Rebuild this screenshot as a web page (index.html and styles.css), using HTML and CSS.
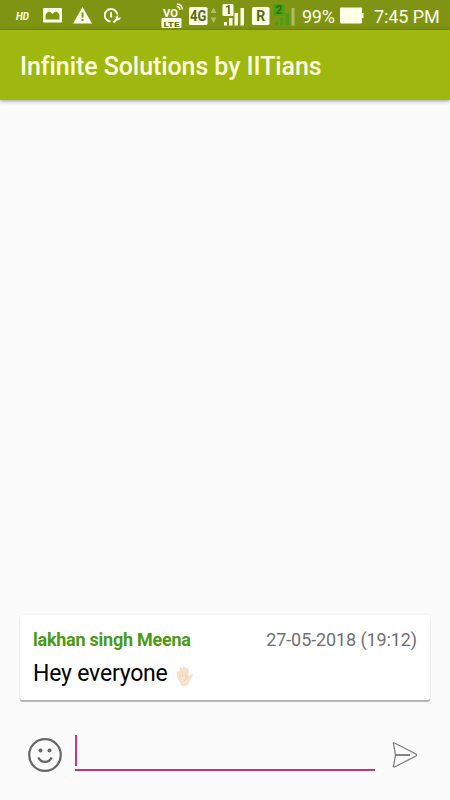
FILE: index.html
```
<!DOCTYPE html>
<html lang="en">
    <head>
        <meta charset="UTF-8">
        <title>Infinite Solutions by IITians</title>
        <link rel="stylesheet" href="styles.css">
    </head>
    <body>
        <div id="app">
            <div class="status">
                <div class="left">
                    <svg class="hd" width="16" height="30" viewBox="0 0 16 30"><text x="1" y="19.500" textLength="13" lengthAdjust="spacingAndGlyphs">HD</text></svg>
                    <svg class="photo" width="20" height="30" viewBox="0 0 20 30">
                        <path fill-rule="evenodd" d="M1 8h17q1 0 1 1v12.500q0 1-1 1H1q-1 0-1-1V9q0-1 1-1zM2.500 19.500h14v-4.500Q14.500 11.500 13 11.500q-1.500 0-3.500 2.500Q7.500 11.500 6 11.500 4.500 11.500 2.500 15z"/>
                    </svg>
                    <svg class="warn" width="20" height="30" viewBox="0 0 20 30">
                        <path fill-rule="evenodd" d="M9.500 7L19 23.500H0zM8.500 12.500v5h2v-5zM8.500 19v2h2v-2z"/>
                    </svg>
                    <svg class="gauge" width="18" height="30" viewBox="0 0 18 30">
                        <path class="line" d="M6.500 21.500A6.300 6.300 0 1 1 13.300 14.500"/>
                        <path d="M6.300 12h1.500l.5 5.500H5.800z"/>
                        <path class="line" d="M9.500 22.500l4-4"/>
                        <path d="M11.500 17l3-2-.5 2 1 1 2-.5-1.500 2.500-3 .5z"/>
                    </svg>
                </div>
                <div class="right">
                    <svg class="volte" width="22" height="30" viewBox="0 0 22 30">
                        <text x="2" y="16.600" textLength="15" lengthAdjust="spacingAndGlyphs">VO</text>
                        <path class="thin" d="M15.500 6.500q3 0 3.500 3.500M16 4q5 .5 5.500 5.500"/>
                        <rect x="0.500" y="18" width="20" height="10" rx="1"/>
                        <text class="cut" x="2.500" y="26.500" textLength="16" lengthAdjust="spacingAndGlyphs">LTE</text>
                    </svg>
                    <svg class="data" width="29" height="30" viewBox="0 0 29 30">
                        <rect x="0" y="7" width="18.500" height="18" rx="1.500"/>
                        <text class="cut" x="1" y="21" textLength="16.500" lengthAdjust="spacingAndGlyphs">4G</text>
                        <path class="dim" d="M21.500 13l3-5.500 3 5.500zM21.500 17.500h6l-3 5.500z"/>
                    </svg>
                    <svg class="sim" width="23" height="30" viewBox="0 0 23 30">
                        <rect x="0.500" y="4" width="11" height="12" rx="1"/>
                        <text class="cut" x="3" y="14.200">1</text>
                        <path d="M2 22h3v3.500H2zM7 18h3.500v7.500H7zM12.500 13H16v12.500h-3.500zM18.500 8H22v17.500h-3.500z"/>
                    </svg>
                    <svg class="roam" width="18" height="30" viewBox="0 0 18 30">
                        <rect x="0" y="7" width="17.500" height="18" rx="1.500"/>
                        <text class="cut" x="4.200" y="20.800">R</text>
                    </svg>
                    <svg class="sim sim2" width="23" height="30" viewBox="0 0 23 30">
                        <rect x="0.500" y="4" width="11" height="12" rx="1"/>
                        <text class="cut" x="2.500" y="14.200">2</text>
                        <path d="M2 22h3v3.500H2zM7 18h3.500v7.500H7zM12.500 13H16v12.500h-3.500z"/>
                        <path class="dim" d="M18.500 8h3v17.500h-3z"/>
                    </svg>
                    <span class="percent">99%</span>
                    <svg class="battery" width="25" height="30" viewBox="0 0 25 30">
                        <path d="M1 7.500h20q1 0 1 1V13h1.500v5H22v4.500q0 1-1 1H1q-1 0-1-1v-14q0-1 1-1z"/>
                    </svg>
                    <span class="time">7:45 PM</span>
                </div>
            </div>

            <div class="header">
                <h1>Infinite Solutions by IITians</h1>
            </div>

            <div class="list">
                <div class="msg">
                    <div class="info">
                        <span class="name">lakhan singh Meena</span>
                        <span class="date">27-05-2018 (19:12)</span>
                    </div>
                    <div class="text">
                        <span>Hey everyone</span>
                        <svg class="hand" width="18" height="20" viewBox="0 0 18 21">
                            <path d="M5 18.500L1.500 12.500 1 6.500Q1.800 4.800 2.800 6.500L3.800 10.500 3.800 3Q5 1.400 6 3L6.500 9.500 7.200 1.700Q8.300 .3 9.400 1.700L9.500 9.500 10.500 2.800Q11.700 1.500 12.500 3L12.200 12 14.300 9.600Q16.200 8.300 17 9.500L13.300 15.500Q12.500 18 11.500 19.800 8 21 5 19.800z"/>
                            <path class="crease" d="M3.800 10.500l.3 1M6.500 9.500v2M9.500 9.500v2M8 16q1-2.500 4.200-4"/>
                        </svg>
                    </div>
                </div>
            </div>

            <div class="send">
                <svg class="smile" width="36" height="36" viewBox="0 0 36 36">
                    <circle class="ring" cx="18" cy="18" r="15.800"/>
                    <circle cx="13.500" cy="13.500" r="2"/>
                    <circle cx="22.500" cy="13.500" r="2"/>
                    <path class="ring" d="M11.300 20.500q2 4.300 6.700 4.300t6.700-4.300"/>
                </svg>
                <div class="input"><i></i></div>
                <svg class="plane" width="28" height="28" viewBox="0 0 28 28">
                    <path d="M2.500 3q-.8-1.500 1-1L25 13q1.300 1 0 2L3.500 26q-1.500.3-1-1L4.500 14z"/>
                    <path d="M4.500 14H19" class="mid"/>
                </svg>
            </div>
        </div>
    </body>
</html>
```
FILE: styles.css
```
*{ margin:0; padding:0; box-sizing: border-box; font-family:Roboto,"Liberation Sans",sans-serif;}
svg{ display: block; flex: none;}
#app{
    display: flex;
    flex-direction: column;
    width: 450px;
    height: 800px;
    background: #fbfbfb;
    overflow: hidden;
}

/* status bar */
.status{
    display: flex;
    justify-content: space-between;
    height: 30px;
    padding: 0 10px 0 15px;
    background: #7f9413;
    color: #fdffe9;
    fill: #fdffe9;
}
.status .left,
.status .right{
    display: flex;
}
.status text{
    font-size: 12px;
    font-weight: bold;
}
.status .cut{
    fill: #5a6b10;
}
.status .dim{
    fill: #b1bd68;
}
.status .hd text{
    font-size: 11px;
    font-style: italic;
}
.photo{ margin-left: 12px;}
.warn{ margin-left: 10px;}
.gauge{ margin-left: 11px;}
.gauge .line{
    fill: none;
    stroke: #fdffe9;
    stroke-width: 2;
}
.volte .thin{
    fill: none;
    stroke: #fdffe9;
    stroke-width: 1.3;
}
.status .volte text{ font-size: 11px;}
.status .volte .cut{ font-size: 8px;}
.data{ margin-left: 6px;}
.status .data text{ font-size: 15px;}
.sim{ margin-left: 4px;}
.roam{ margin-left: 7px;}
.sim2{
    margin-left: 3px;
    fill: #47a015;
}
.status .sim2 .cut{ fill: #2f7208;}
.status .roam text{ font-size: 14px;}
.percent,
.time{
    font-size: 18px;
    line-height: 33px;
    white-space: nowrap;
}
.percent{
    width: 33px;
    margin-left: 6px;
    letter-spacing: -.3px;
}
.battery{ margin-left: 5px;}
.time{
    width: 66px;
    margin-left: 9px;
    letter-spacing: -.1px;
}

/* title */
.header{
    position: relative;
    height: 70px;
    padding-left: 20px;
    background: #9eb80f;
    box-shadow: 0 1px 4px rgba(0,0,0,.4);
}
.header h1{
    font-size: 25px;
    font-weight: 500;
    letter-spacing: -.08px;
    line-height: 73px;
    color: #fdffdf;
    white-space: nowrap;
}

/* messages */
.list{
    flex: 1;
    display: flex;
    flex-direction: column;
    justify-content: flex-end;
    padding: 0 20px;
}
.msg{
    height: 85px;
    padding: 13px 13px 0;
    background: #fff;
    border-radius: 2px;
    box-shadow: 0 2px 1px rgba(0,0,0,.28), 0 0 2px rgba(0,0,0,.08);
}
.msg .info{
    display: flex;
    justify-content: space-between;
    font-size: 18px;
    line-height: 24px;
}
.msg .name{
    font-weight: bold;
    letter-spacing: -.25px;
    color: #4c9a13;
}
.msg .date{
    letter-spacing: -.1px;
    color: #707070;
}
.msg .text{
    display: flex;
    align-items: center;
    margin-top: 6px;
    font-size: 23px;
    letter-spacing: -.2px;
    line-height: 32px;
    color: #000;
}
.hand{
    margin: 3px 0 0 8px;
    fill: #fae3cc;
    stroke: #ecd0b6;
    stroke-width: .6;
}
.hand .crease{
    fill: none;
    stroke: #e0bd9e;
}

/* input */
.send{
    display: flex;
    align-items: center;
    height: 100px;
    padding: 10px 31px 0 27px;
}
.smile{ fill: #666;}
.smile .ring{
    fill: none;
    stroke: #666;
    stroke-width: 2.2;
}
.input{
    flex: 1;
    height: 36px;
    margin: 0 16px 4px 12px;
    border-bottom: 2px solid #c9307a;
}
.input i{
    display: block;
    width: 2px;
    height: 31px;
    background: #d62f80;
}
.plane{
    fill: none;
    stroke: #777;
    stroke-width: 1.2;
}
.plane .mid{ stroke-width: 1.8;}
```
